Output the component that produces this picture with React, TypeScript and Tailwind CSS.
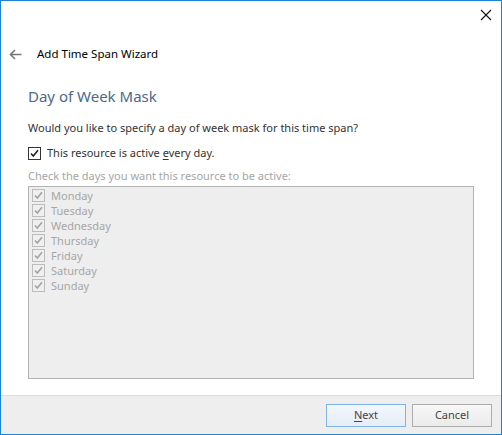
import React from "react";

const days = ["Monday", "Tuesday", "Wednesday", "Thursday", "Friday", "Saturday", "Sunday"];

const Check: React.FC<{ disabled?: boolean }> = ({ disabled }) => (
  <span
    className={
      "flex h-[13px] w-[13px] shrink-0 items-center justify-center border " +
      (disabled ? "border-[#bcbcbc] bg-[#efefef]" : "border-[#333333] bg-white")
    }
  >
    <svg width="11" height="11" viewBox="0 0 11 11">
      <path
        d="M2 5.5 L4.3 8 L9 2.2"
        fill="none"
        stroke={disabled ? "#a3a3a3" : "#222222"}
        strokeWidth="1.6"
      />
    </svg>
  </span>
);

export default function App() {
  return (
    <div className="flex h-[435px] w-[502px] flex-col border border-[#1883d7] bg-white font-['Noto_Sans',sans-serif] text-[11px] text-[#333333]">
      {/* title bar */}
      <div className="flex h-[29px] shrink-0 justify-end pr-[9px] pt-[8px]">
        <svg width="12" height="12" viewBox="0 0 12 12">
          <path d="M1 1 L11 11 M11 1 L1 11" stroke="#111111" strokeWidth="1.1" />
        </svg>
      </div>

      {/* wizard header */}
      <div className="mt-[12px] flex h-[24px] items-center pl-[8px]">
        <svg width="13" height="11" viewBox="0 0 13 11">
          <path d="M6 1 L1.5 5.5 L6 10 M1.5 5.5 L12.5 5.5" fill="none" stroke="#777777" strokeWidth="1.6" />
        </svg>
        <span className="ml-[15px] text-[11.5px] text-black">Add Time Span Wizard</span>
      </div>

      {/* content */}
      <div className="flex flex-1 flex-col px-[27px]">
        <div className="mt-[20px] text-[15px] leading-[20px] text-[#4b6a89]">Day of Week Mask</div>
        <div className="mt-[14px] leading-[16px]">
          Would you like to specify a day of week mask for this time span?
        </div>
        <label className="mt-[9px] flex items-center gap-[6px] leading-[16px]">
          <Check />
          <span>
            This resource is active <span className="underline underline-offset-2">e</span>very day.
          </span>
        </label>
        <div className="mt-[7px] leading-[16px] text-[#a6a6a6]">
          Check the days you want this resource to be active:
        </div>
        <div className="mt-[2px] h-[193px] border border-[#b4b4b4] bg-[#eeeeee] pl-[3px] pt-[1px]">
          {days.map((d) => (
            <div key={d} className="flex h-[15px] items-center gap-[6px] leading-[15px] text-[#a6a6a6]">
              <Check disabled />
              <span>{d}</span>
            </div>
          ))}
        </div>
      </div>

      {/* footer */}
      <div className="flex h-[39px] shrink-0 items-center justify-end gap-[6px] border-t border-[#dcdcdc] bg-[#eeeeee] pr-[9px]">
        <button className="h-[23px] w-[80px] border border-[#7eb4ea] bg-gradient-to-b from-[#f3f7fc] to-[#e5edf6] text-[#444444]">
          <span className="underline underline-offset-2">N</span>ext
        </button>
        <button className="h-[23px] w-[80px] border border-[#adadad] bg-gradient-to-b from-[#f7f7f7] to-[#ebebeb] text-[#444444]">
          Cancel
        </button>
      </div>
    </div>
  );
}
